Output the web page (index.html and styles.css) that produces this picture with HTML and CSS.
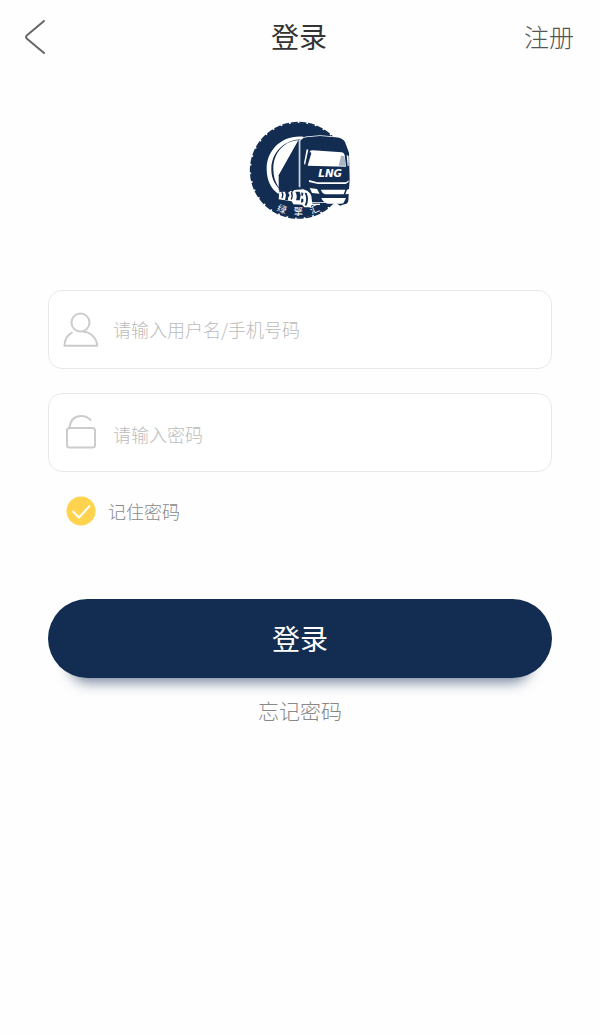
FILE: index.html
```html
<!DOCTYPE html>
<html lang="zh-CN">
<head>
<meta charset="utf-8">
<meta name="viewport" content="width=device-width, initial-scale=1">
<title>登录</title>
<link rel="stylesheet" href="styles.css">
</head>
<body>
<header class="topbar">
  <button class="back" type="button" aria-label="返回">
    <svg width="22" height="36" viewBox="0 0 22 36" aria-hidden="true"><path d="M20 2L3 16.300Q1 18 3 19.700L20 34"/></svg>
  </button>
  <h1 class="title">登录</h1>
  <a class="register" href="#register">注册</a>
</header>
<main class="page">
  <svg class="logo" width="120" height="116" viewBox="0 0 360 348" role="img" aria-label="绿擎汇 LNG">
    <circle class="navy" cx="175" cy="175" r="142"/>
    <circle class="tread" cx="175" cy="175" r="143"/>
    <path class="white" d="M190 74C125 68 80 115 80 170C80 205 93 229 115 246L121 232C101 216 93 193 94 168C96 123 130 82 190 82Z"/>
    <path class="white" d="M176 85C130 87 101 125 100 168C100 193 106 214 119 228L117 190Z"/>
    <path class="navy" d="M174 87L116 190V234L176 226Z"/>
    <path class="navy cab" d="M181 87Q185 79 198 76L240 72L287 76Q309 78 315 90L327 122L329 200L325 266Q324 275 313 277L300 281L285 270H213L181 230Z"/>
    <path class="edge" d="M178 84V224"/>
    <path class="white" d="M209 119Q211 115 218 115L305 121Q312 122 314 129L318 164L202 161Z"/>
    <path class="navy" d="M209 118L194 158L202 164L214 124Z"/>
    <path class="glass" d="M303 131L313 132L317 162L296 161Z"/>
    <path class="white" d="M320 129L326 133V162H323ZM200 112L192 153L195 160L205 113Z"/>
    <text class="lng" x="235" y="195">LNG</text>
    <path class="white" d="M207 204L232 211H318L327 205L325 211L317 216H234L207 210Z"/>
    <path class="white" d="M242 233H316L311 247H255Q246 243 242 233ZM244 258H318L311 272Q309 275 303 275H262Q249 271 244 258Z"/>
    <path class="white" d="M209 228L231 231L239 245L216 243ZM321 233L327 231V246L316 247Z"/>
    <path class="white" d="M118 234L181 227L195 234Q209 238 214 252L217 276L212 286H193L186 278L160 277L155 268L116 262Z"/>
    <path class="navy" d="M118 232L181 226L190 232L163 234L157 240L152 236L145 242L134 239L118 240ZM124 241Q129 250 124 258L128 259Q133 250 129 241ZM134 236H144V242L149 249L144 258V265L135 264L138 250ZM152 241Q157 251 152 262L156 263Q161 252 157 240ZM166 239H179L182 250L179 265H168Q173 250 166 239ZM184 241L190 243L189 251H184ZM184 260H190V270L183 272ZM194 242Q203 262 194 280L199 281Q209 263 200 243Z"/>
    <path class="white-line" d="M213 277L240 277"/>
    <g class="mark">
      <text transform="translate(122 301) rotate(22)" text-anchor="middle">绿</text>
      <text x="175" y="309" text-anchor="middle">擎</text>
      <text transform="translate(228 301) rotate(-24)" text-anchor="middle">汇</text>
    </g>
  </svg>

  <form class="login">
    <label class="field">
      <svg class="icon" width="36" height="36" viewBox="0 0 36 36" aria-hidden="true"><circle cx="17.500" cy="10.500" r="9"/><path d="M9.500 20.300C4.500 22.700 1.500 28 1.500 33.800H34.200C33.800 26.500 28 20 20 19.800"/></svg>
      <input class="entry" type="text" placeholder="请输入用户名/手机号码" aria-label="用户名/手机号码" autocomplete="username">
    </label>
    <label class="field">
      <svg class="icon" width="36" height="36" viewBox="0 0 36 36" aria-hidden="true"><rect x="4" y="13" width="28" height="19.500" rx="2.500"/><path d="M6.500 12.500C7.500 5 12 1 18 1C22 1 25.500 2.500 28 5.500"/></svg>
      <input class="entry entry-password" type="password" placeholder="请输入密码" aria-label="密码" autocomplete="current-password">
    </label>
    <label class="remember">
      <input class="tick" type="checkbox" checked>
      <svg class="tick-mark" width="30" height="30" viewBox="0 0 30 30" aria-hidden="true"><circle cx="15" cy="15" r="14.500"/><path d="M6.500 15L13 21.500L24 9.500"/></svg>
      <span>记住密码</span>
    </label>
    <button class="submit" type="submit">登录</button>
  </form>
  <a class="forgot" href="#forgot">忘记密码</a>
</main>
</body>
</html>
```

FILE: styles.css
```css
* { box-sizing: border-box; }

body {
  margin: 0;
  background: #fefefe;
  color: #333;
  font-family: "Noto Sans CJK SC", sans-serif;
  font-weight: 300;
}

a { color: inherit; text-decoration: none; }

button { border: 0; padding: 0; background: none; font: inherit; cursor: pointer; }

.topbar {
  display: grid;
  grid-template-columns: 1fr auto 1fr;
  align-items: center;
  height: 74px;
  padding: 0 26px 0 24px;
}

.back { display: flex; justify-self: start; }
.back path { fill: none; stroke: #666; stroke-width: 2; stroke-linecap: round; }

.title { margin: 0; padding-bottom: 2px; font-size: 28px; line-height: 40px; font-weight: 400; }

.register { justify-self: end; padding-bottom: 2px; color: #555; font-size: 25px; line-height: 40px; }

.page {
  display: flex;
  flex-direction: column;
  align-items: center;
  padding: 38px 48px 0;
}

.logo { display: block; }
.navy { fill: #132d52; }
.cab { stroke: #fff; stroke-width: 5; paint-order: stroke; }
.white { fill: #fff; }
.glass { fill: #aab5c6; }
.tread { fill: none; stroke: #132d52; stroke-width: 5; stroke-dasharray: 21 5; }
.edge { fill: none; stroke: #cbd3df; stroke-width: 4; }
.white-line { fill: none; stroke: #fff; stroke-width: 4; }
.lng { fill: #fff; font: italic 700 31px "DejaVu Sans", sans-serif; }
.mark { fill: #fff; font-size: 28px; font-weight: 400; }

.login {
  display: flex;
  flex-direction: column;
  width: 100%;
  margin-top: 62px;
}

.field {
  display: flex;
  align-items: center;
  gap: 14px;
  height: 79px;
  margin-bottom: 24px;
  padding: 0 14px;
  border: 1px solid #e9e9e9;
  border-radius: 14px;
  background: #fff;
}

.icon { flex: none; fill: none; stroke: #ccc; stroke-width: 2; }

.entry {
  flex: 1;
  min-width: 0;
  height: 100%;
  padding: 0 0 2px;
  border: 0;
  outline: 0;
  background: transparent;
  color: #333;
  font: inherit;
  font-size: 18px;
}
.entry-password { padding: 3px 0 0; }
.entry::placeholder { color: #bbb; opacity: 1; }

.remember {
  display: flex;
  align-items: center;
  align-self: flex-start;
  gap: 12px;
  margin-left: 18px;
  color: #888;
  font-size: 18px;
  line-height: 30px;
}
.tick { position: absolute; width: 30px; height: 30px; margin: 0; opacity: 0; }
.tick-mark circle { fill: #ddd; }
.tick-mark path { fill: none; stroke: #fff; stroke-width: 2; }
.tick:checked + .tick-mark circle { fill: #ffd34d; }

.submit {
  height: 79px;
  margin-top: 73px;
  padding-bottom: 2px;
  border-radius: 40px;
  background: #132d52;
  box-shadow: 0 26px 14px -22px #132d5299;
  color: #fff;
  font-size: 28px;
  font-weight: 400;
}

.forgot { margin-top: 16px; color: #888; font-size: 21px; line-height: 32px; }
```
